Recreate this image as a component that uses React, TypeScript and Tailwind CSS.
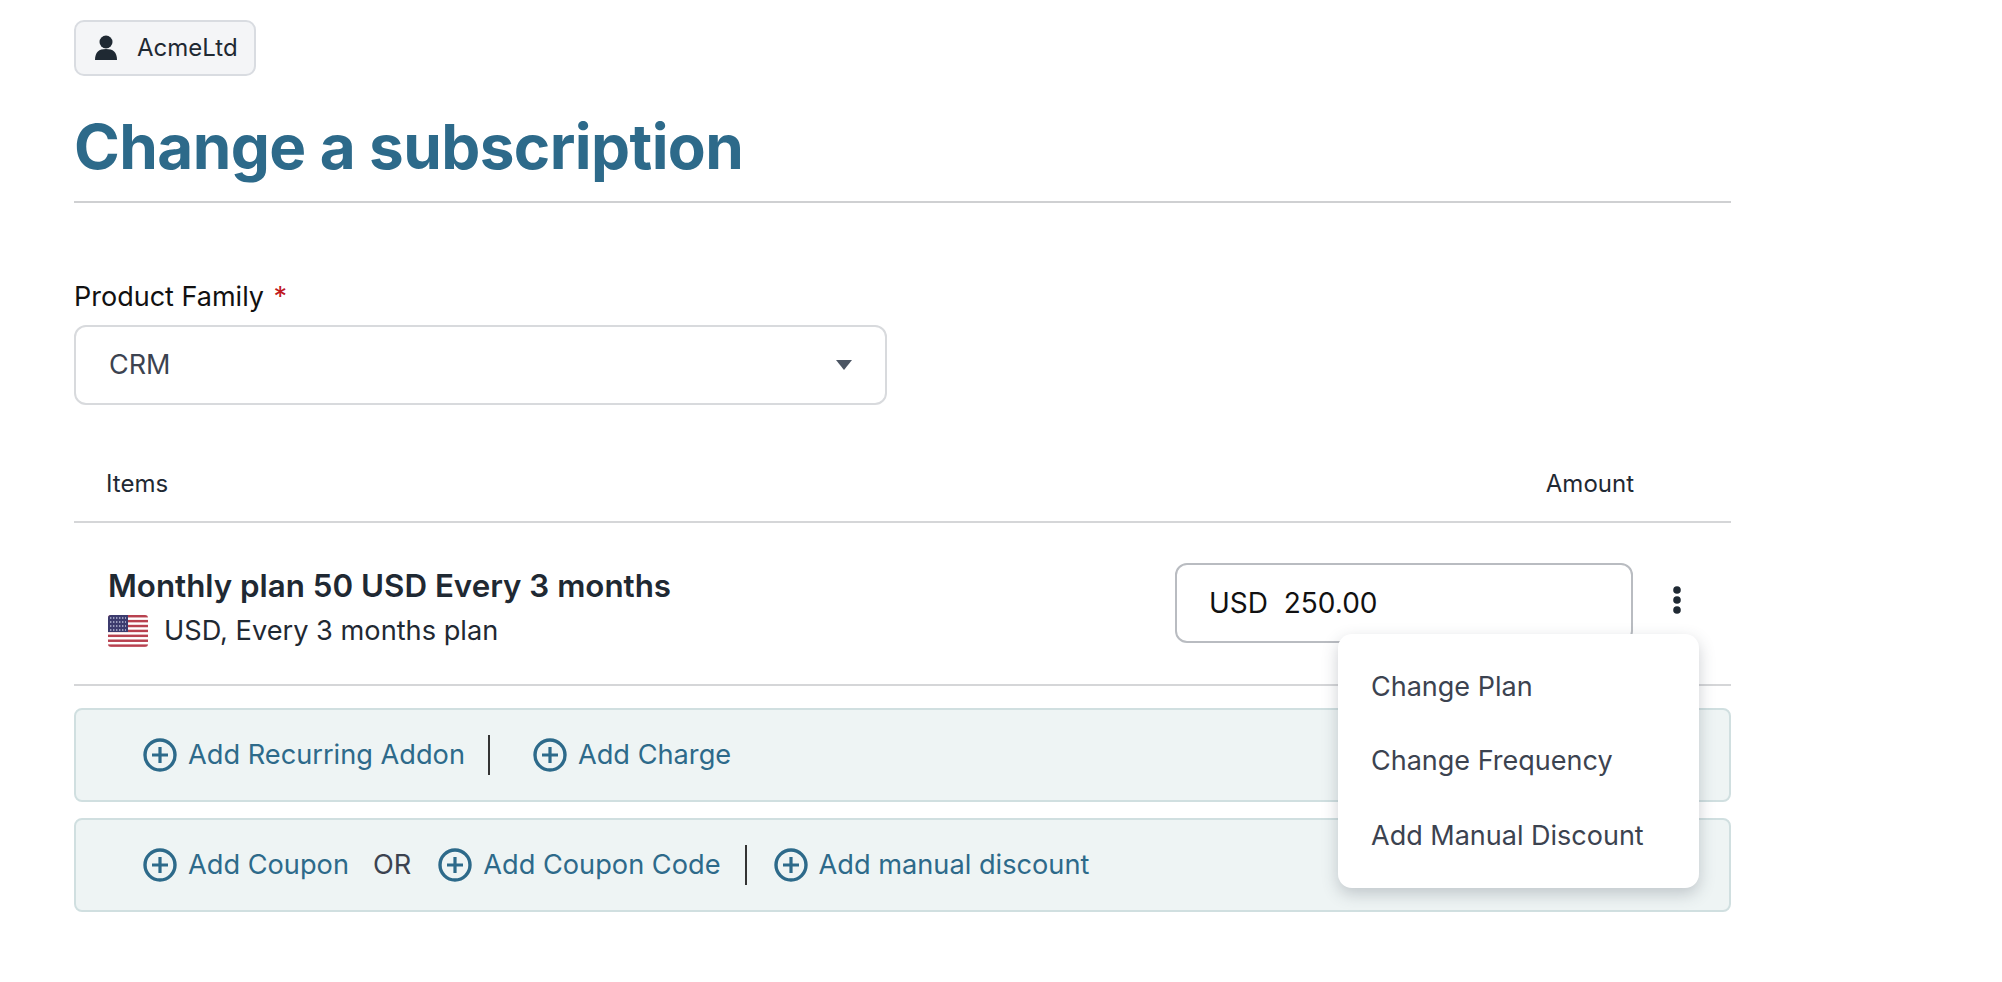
function PlusIcon() {
  return (
    <svg width="34" height="34" viewBox="0 0 34 34" fill="none" stroke="#2d6a8a" className="shrink-0">
      <circle cx="17" cy="17" r="15" strokeWidth="3.4" />
      <path d="M17 9v16M9 17h16" strokeWidth="3.2" />
    </svg>
  );
}

function UserIcon() {
  return (
    <svg width="24" height="26" viewBox="0 0 24 26" fill="#1f2933">
      <circle cx="12" cy="7" r="6.5" />
      <path d="M1 25c0-8 4-11 11-11s11 3 11 11z" />
    </svg>
  );
}

function DotsIcon() {
  return (
    <svg width="10" height="28" viewBox="0 0 10 28" fill="#1f2933">
      <circle cx="5" cy="4" r="3.8" />
      <circle cx="5" cy="14" r="3.8" />
      <circle cx="5" cy="24" r="3.8" />
    </svg>
  );
}

function Flag() {
  const stripes = [0, 1, 2, 3, 4, 5, 6];
  return (
    <svg width="40" height="32" viewBox="0 0 40 32" className="shrink-0 rounded-[3px]">
      <rect width="40" height="32" fill="#fff" />
      {stripes.map((s) => (
        <rect key={s} y={s * 4.9} width="40" height="2.45" fill="#b8414f" />
      ))}
      <rect width="20" height="17" fill="#3c3b6e" />
      <path d="M2 3h16M2 7h16M2 11h16M2 15h16" stroke="#b9bdd8" strokeWidth="1.4" strokeDasharray="1.4 1.6" />
    </svg>
  );
}

function AddLink({ label }: { label: string }) {
  return (
    <span className="flex items-center gap-[11px] text-[#2d6a8a]">
      <PlusIcon />
      {label}
    </span>
  );
}

export default function App() {
  return (
    <div className="min-h-[982px] bg-white font-['Inter',sans-serif] text-[#111827]">
      <div className="w-[1657px] ml-[74px] pt-[20px]">
        <div className="inline-flex items-center gap-[19px] h-[56px] w-[182px] pl-[18px] rounded-[10px] border-2 border-[#d9dce1] bg-[#f4f5f7] text-[24px] text-[#1f2933]">
          <UserIcon />
          AcmeLtd
        </div>

        <h1 className="mt-[38px] pb-[21px] border-b-2 border-[#cfd0d2] text-[62px] leading-[66px] font-bold tracking-[-0.6px] text-[#2d6a8a]">
          Change a subscription
        </h1>

        <div className="mt-[79px] text-[27px] leading-[30px] text-[#111]">
          Product Family <span className="ml-[2px] text-[#c0191f]">*</span>
        </div>
        <div className="mt-[13px] w-[813px] h-[80px] flex items-center justify-between pl-[33px] pr-[33px] rounded-[12px] border-2 border-[#d8dadd] text-[27px] text-[#3c4350]">
          CRM
          <svg width="16" height="10" viewBox="0 0 16 10" fill="#4b5563">
            <path d="M0 0h16L8 10z" />
          </svg>
        </div>

        <div className="mt-[54px] h-[64px] pb-[13px] flex items-center justify-between pl-[32px] pr-[97px] border-b-2 border-[#d5d6d8] text-[24px] text-[#1f2933]">
          <span>Items</span>
          <span>Amount</span>
        </div>

        <div className="relative h-[163px] border-b-2 border-[#d5d6d8] flex items-start justify-between pl-[34px]">
          <div className="pt-[43px]">
            <div className="text-[31.3px] leading-[40px] font-semibold text-[#1f2933]">
              Monthly plan 50 USD Every 3 months
            </div>
            <div className="mt-[7px] flex items-center gap-[16px] text-[27.2px] leading-[36px] text-[#1f2933]">
              <Flag />
              USD, Every 3 months plan
            </div>
          </div>
          <div className="flex items-start pt-[40px] pr-[49px]">
            <div className="w-[458px] h-[80px] flex items-center pl-[32px] rounded-[12px] border-2 border-[#b9bcc1] text-[28px] text-[#111] whitespace-pre">
              USD  250.00
            </div>
            <span className="ml-[39px] mt-[23px]">
              <DotsIcon />
            </span>
          </div>

          <div className="absolute left-[1264px] top-[111px] z-10 w-[361px] h-[254px] py-[17px] rounded-[14px] bg-white shadow-[0_6px_16px_rgba(55,65,81,0.25)] text-[27px] text-[#3c4350] flex flex-col">
            <div className="pl-[33px] h-[74px] flex items-center">Change Plan</div>
            <div className="pl-[33px] h-[74px] flex items-center">Change Frequency</div>
            <div className="pl-[33px] h-[74px] flex items-center translate-y-[2px]">Add Manual Discount</div>
          </div>
        </div>

        <div className="mt-[22px] h-[94px] flex items-center pl-[67px] rounded-[8px] border-2 border-[#d0dfe0] bg-[#eef4f4] text-[27.2px]">
          <AddLink label="Add Recurring Addon" />
          <span className="ml-[23px] mr-[43px] h-[40px] w-[2px] bg-[#333]" />
          <AddLink label="Add Charge" />
        </div>

        <div className="mt-[16px] h-[94px] flex items-center pl-[67px] rounded-[8px] border-2 border-[#d0dfe0] bg-[#eef4f4] text-[27.2px]">
          <AddLink label="Add Coupon" />
          <span className="ml-[24px] mr-[27px] text-[#3c4350]">OR</span>
          <AddLink label="Add Coupon Code" />
          <span className="ml-[24px] mr-[27px] h-[40px] w-[2px] bg-[#333]" />
          <AddLink label="Add manual discount" />
        </div>
      </div>
    </div>
  );
}
